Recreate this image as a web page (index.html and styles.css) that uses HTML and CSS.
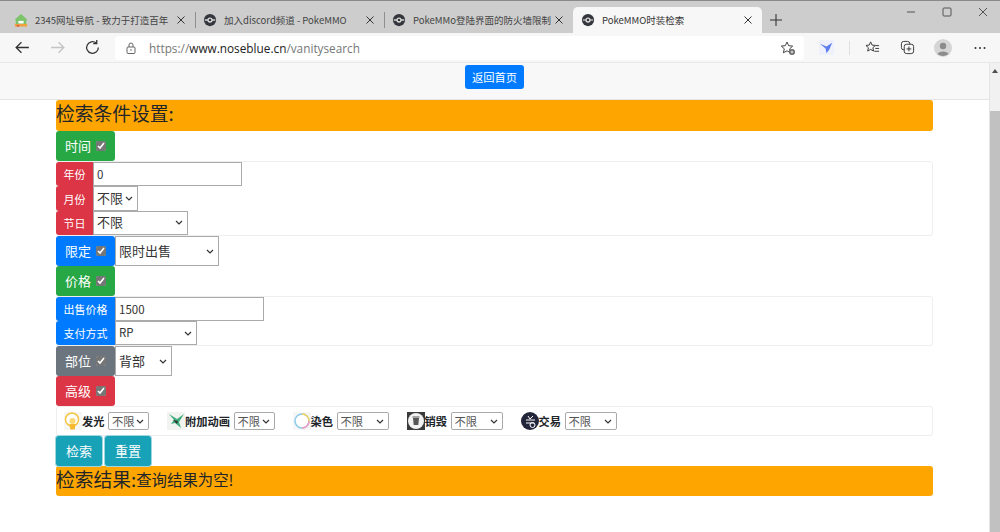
FILE: index.html
```html
<!DOCTYPE html>
<html lang="zh-CN">
<head>
    <meta charset="UTF-8">
    <title>PokeMMO时装检索</title>
    <link rel="stylesheet" href="styles.css">
</head>
<body>

<div class="tabbar">
    <div class="tab">
        <svg class="favicon" viewBox="0 0 16 16"><path d="M8 1 1 7.500l1 1V14h12V8.500l1-1z" fill="#7cc36a"/><path d="M5 9h6v3H5z" fill="#fff"/><path d="M1 12.500h14v3H1z" fill="#f0a33c"/><path d="M3 13.500h3v2H3z" fill="#e2574c"/></svg>
        <span class="tab-title">2345网址导航 - 致力于打造百年</span>
        <svg class="tab-close" viewBox="0 0 8 8"><path d="M.5.500l7 7M7.500.500l-7 7" stroke="#333" fill="none"/></svg>
    </div>
    <div class="tab tab-sep">
        <svg class="favicon" viewBox="0 0 16 16"><circle cx="8" cy="8" r="7" fill="#33363c"/><path d="M2 7.200h12v1.600H2z" fill="#ddd"/><circle cx="8" cy="8" r="3" fill="#ddd"/><circle cx="8" cy="8" r="1.500" fill="#33363c"/></svg>
        <span class="tab-title">加入discord频道 - PokeMMO</span>
        <svg class="tab-close" viewBox="0 0 8 8"><path d="M.5.500l7 7M7.500.500l-7 7" stroke="#333" fill="none"/></svg>
    </div>
    <div class="tab tab-sep">
        <svg class="favicon" viewBox="0 0 16 16"><circle cx="8" cy="8" r="7" fill="#33363c"/><path d="M2 7.200h12v1.600H2z" fill="#ddd"/><circle cx="8" cy="8" r="3" fill="#ddd"/><circle cx="8" cy="8" r="1.500" fill="#33363c"/></svg>
        <span class="tab-title">PokeMMo登陆界面的防火墙限制</span>
        <svg class="tab-close" viewBox="0 0 8 8"><path d="M.5.500l7 7M7.500.500l-7 7" stroke="#333" fill="none"/></svg>
    </div>
    <div class="tab tab-active">
        <svg class="favicon" viewBox="0 0 16 16"><circle cx="8" cy="8" r="7" fill="#33363c"/><path d="M2 7.200h12v1.600H2z" fill="#bbb"/><circle cx="8" cy="8" r="3" fill="#ddd"/><circle cx="8" cy="8" r="1.500" fill="#33363c"/></svg>
        <span class="tab-title">PokeMMO时装检索</span>
        <svg class="tab-close" viewBox="0 0 8 8"><path d="M.5.500l7 7M7.500.500l-7 7" stroke="#333" fill="none"/></svg>
    </div>
    <svg class="new-tab" viewBox="0 0 12 12"><path d="M6 0v12M0 6h12" stroke="#333" stroke-width="1.100" fill="none"/></svg>
    <div class="window-btns">
        <svg viewBox="0 0 10 10"><path d="M1 5h8" stroke="#555" fill="none"/></svg>
        <svg viewBox="0 0 10 10"><rect x="1" y="1" width="8" height="8" rx="1" stroke="#555" fill="none"/></svg>
        <svg viewBox="0 0 10 10"><path d="M1 1l8 8M9 1l-8 8" stroke="#555" fill="none"/></svg>
    </div>
</div>

<div class="toolbar">
    <svg class="tool-icon" viewBox="0 0 16 16"><path d="M14 8H2M7 3 2 8l5 5" stroke="#333" stroke-width="1.200" fill="none"/></svg>
    <svg class="tool-icon" viewBox="0 0 16 16"><path d="M2 8h12M9 3l5 5-5 5" stroke="#c4c4c4" stroke-width="1.200" fill="none"/></svg>
    <svg class="tool-icon" viewBox="0 0 16 16"><path d="M13.500 8A5.500 5.500 0 1 1 11.500 3.800M12 1v3.300H8.700" stroke="#333" stroke-width="1.200" fill="none"/></svg>
    <div class="addressbar">
        <svg class="lock" viewBox="0 0 12 12"><rect x="2" y="5" width="8" height="6.500" rx="1" stroke="#666" fill="none"/><path d="M4 5V3a2 2 0 0 1 4 0v2" stroke="#666" fill="none"/><circle cx="6" cy="8" r=".8" fill="#666"/></svg>
        <span class="url"><span class="url-dim">https://</span>www.noseblue.cn<span class="url-dim">/vanitysearch</span></span>
        <svg class="star" viewBox="0 0 16 16"><path d="M7 2l1.700 3.700 4 .4-3 2.700.9 4L7 10.800 3.400 12.800l.9-4-3-2.700 4-.4z" stroke="#444" fill="#fff"/><circle cx="12" cy="12" r="3" fill="#666"/><path d="M10.500 12h3M12 10.500v3" stroke="#fff" stroke-width=".8"/></svg>
    </div>
    <div class="ext-icons">
        <svg class="ext" viewBox="0 0 16 16"><rect width="16" height="16" fill="#eef0fb"/><path d="M1 4l7 3 6-4-3 7-3 4-1-5z" fill="#5c7cf0"/></svg>
        <span class="ext-sep"></span>
        <svg class="ext" viewBox="0 0 16 16"><path d="M6 2l1.500 3.400 3.500.4-2.600 2.400.7 3.600L6 10l-3.100 1.800.7-3.600L1 5.800l3.500-.4zM11 6h4M11 9h4M10 12h5" stroke="#333" fill="none"/></svg>
        <svg class="ext" viewBox="0 0 16 16"><rect x="1.500" y="1.500" width="9" height="9" rx="2.500" stroke="#333" fill="none"/><rect x="4.500" y="4.500" width="10" height="10" rx="2.500" stroke="#333" fill="#f7f7f7"/><path d="M9.500 7v5M7 9.500h5" stroke="#333"/></svg>
        <svg class="avatar" viewBox="0 0 18 18"><circle cx="9" cy="9" r="9" fill="#d5d5d5"/><circle cx="9" cy="7" r="3.200" fill="#8c8c8c"/><path d="M3.500 15c1-3.500 10-3.500 11 0a9 9 0 0 1-11 0z" fill="#8c8c8c"/></svg>
        <svg class="more" viewBox="0 0 12 4"><circle cx="1.500" cy="2" r="1" fill="#333"/><circle cx="6" cy="2" r="1" fill="#333"/><circle cx="10.500" cy="2" r="1" fill="#333"/></svg>
    </div>
</div>

<div class="viewport">
    <div class="page">
        <nav class="topnav">
            <a class="btn-home">返回首页</a>
        </nav>

        <main class="container">
            <h2 class="heading heading-top">检索条件设置:</h2>

            <div class="line"><label class="tag tag-green">时间 <input type="checkbox" checked></label></div>
            <div class="card card-date">
                <div class="group">
                    <span class="tag-sm tag-sm-year tag-red">年份</span>
                    <input class="field" type="text" value="0">
                </div>
                <div class="group">
                    <span class="tag-sm tag-sm-year tag-red">月份</span>
                    <select class="sel sel-month"><option>不限</option></select>
                </div>
                <div class="group">
                    <span class="tag-sm tag-sm-year tag-red">节日</span>
                    <select class="sel sel-festival"><option>不限</option></select>
                </div>
            </div>

            <div class="line">
                <label class="tag tag-blue">限定 <input type="checkbox" checked></label>
                <select class="sel sel-limit"><option>限时出售</option></select>
            </div>

            <div class="line"><label class="tag tag-green">价格 <input type="checkbox" checked></label></div>
            <div class="card">
                <div class="group">
                    <span class="tag-sm tag-blue">出售价格</span>
                    <input class="field" type="text" value="1500">
                </div>
                <div class="group">
                    <span class="tag-sm tag-blue">支付方式</span>
                    <select class="sel sel-pay"><option>RP</option></select>
                </div>
            </div>

            <div class="line">
                <label class="tag tag-gray">部位 <input type="checkbox" checked></label>
                <select class="sel sel-part"><option>背部</option></select>
            </div>

            <div class="line"><label class="tag tag-red">高级 <input type="checkbox" checked></label></div>
            <div class="card card-adv">
                <div class="adv">
                    <svg class="adv-icon" viewBox="0 0 18 18"><rect width="18" height="18" fill="#f6f6f6"/><circle cx="8" cy="7.500" r="6.500" fill="#fff" stroke="#f5c542" stroke-width="1.500"/><path d="M5.500 12h6l-.8 5.500H6.300z" fill="#f5b82e"/><circle cx="8.500" cy="9" r="3" fill="#fbd872"/></svg>
                    <b>发光</b>
                    <select class="sel-adv sel-adv-short"><option>不限</option></select>
                </div>
                <div class="adv">
                    <svg class="adv-icon" viewBox="0 0 18 18"><rect width="18" height="18" fill="#f1f3f1"/><path d="M2 2l8 5 7-5-5 8 2 6-6-5-4 1 3-4z" fill="#3fae7d"/><path d="M6 8l5 1-1 3z" fill="#333"/></svg>
                    <b>附加动画</b>
                    <select class="sel-adv sel-adv-short"><option>不限</option></select>
                </div>
                <div class="adv">
                    <svg class="adv-icon" viewBox="0 0 18 18"><rect width="18" height="18" fill="#f6f6f6"/><circle cx="9" cy="9" r="7" fill="#fff" stroke="#8ccbe8" stroke-width="1.500"/><path d="M9 2a7 7 0 0 1 7 7" stroke="#f3d35a" stroke-width="1.500" fill="none"/><path d="M16 9a7 7 0 0 1-7 7" stroke="#f29bbd" stroke-width="1.500" fill="none"/></svg>
                    <b>染色</b>
                    <select class="sel-adv sel-adv-long"><option>不限</option></select>
                </div>
                <div class="adv">
                    <svg class="adv-icon" viewBox="0 0 18 18"><rect width="18" height="18" fill="#3a3a3a"/><circle cx="9" cy="9" r="8" fill="#f2f2f2"/><path d="M6 6h6l-.7 7H6.700z" fill="#555"/><path d="M5.500 5h7" stroke="#555"/></svg>
                    <b>销毁</b>
                    <select class="sel-adv sel-adv-long"><option>不限</option></select>
                </div>
                <div class="adv">
                    <svg class="adv-icon" viewBox="0 0 18 18"><circle cx="9" cy="9" r="9" fill="#23253a"/><path d="M7 4l2 3 3-3M5 8h9M5 11h8" stroke="#fff" fill="none"/><circle cx="11.500" cy="13" r="2.500" stroke="#fff" fill="none"/></svg>
                    <b>交易</b>
                    <select class="sel-adv sel-adv-long"><option>不限</option></select>
                </div>
            </div>

            <div class="line actions">
                <a class="btn-info">检索</a>
                <a class="btn-info">重置</a>
            </div>

            <h2 class="heading">检索结果:<small>查询结果为空!</small></h2>
        </main>
    </div>

    <div class="scrollbar">
        <span class="scroll-arrow"></span>
        <span class="scroll-thumb"></span>
    </div>
</div>

</body>
</html>
```

FILE: styles.css
```css
* {
    box-sizing: border-box;
}

html, body {
    height: 100%;
}

body {
    margin: 0;
    overflow: hidden;
    display: flex;
    flex-direction: column;
    font-family: "Noto Sans CJK SC", "Noto Sans", sans-serif;
    color: #212529;
    background-color: #fff;
}

/* browser chrome */
.tabbar {
    height: 33px;
    flex: none;
    display: flex;
    align-items: flex-end;
    padding-left: 6px;
    background-color: #cdcdcd;
    border-top: 1px solid #8a8a8a;
}

.tab {
    width: 189px;
    height: 26px;
    display: flex;
    align-items: center;
    padding-left: 8px;
    font-size: 9.500px;
    color: #444;
    position: relative;
}

.tab-sep::before {
    content: "";
    position: absolute;
    left: 0;
    top: 5px;
    height: 16px;
    border-left: 1px solid #8f8f8f;
}

.tab-active {
    background-color: #f7f7f7;
    border-radius: 5px 5px 0 0;
    color: #333;
}

.favicon {
    width: 14px;
    height: 14px;
    flex: none;
}

.tab-title {
    width: 139px;
    margin-left: 7px;
    white-space: nowrap;
}

.tab-close {
    width: 8px;
    height: 8px;
    flex: none;
    margin-left: 3px;
}

.new-tab {
    width: 12px;
    height: 12px;
    margin: 0 0 7px 8px;
}

.window-btns {
    margin-left: auto;
    align-self: flex-start;
    display: flex;
    gap: 26px;
    margin-top: 6px;
    padding-right: 12px;
}

.window-btns svg {
    width: 10px;
    height: 10px;
}

.toolbar {
    height: 30px;
    flex: none;
    display: flex;
    align-items: center;
    padding: 0 0 0 14px;
    background-color: #f7f7f7;
    border-bottom: 1px solid #e8e8e8;
}

.tool-icon {
    width: 17px;
    height: 17px;
    margin-right: 18px;
}

.addressbar {
    width: 689px;
    height: 24px;
    margin-left: -4px;
    display: flex;
    align-items: center;
    padding: 0 8px 0 10px;
    background-color: #fff;
    border-radius: 4px;
}

.lock {
    width: 12px;
    height: 12px;
}

.url {
    margin-left: 12px;
    font-family: "Open Sans", sans-serif;
    font-size: 11.800px;
    color: #222;
}

.url-dim {
    color: #777;
}

.star {
    width: 16px;
    height: 16px;
    margin-left: auto;
}

.ext-icons {
    display: flex;
    align-items: center;
    margin-left: 15px;
}

.ext {
    width: 15px;
    height: 15px;
}

.ext-sep {
    height: 14px;
    margin: 0 15px 0 15px;
    border-left: 1px solid #e0e0e0;
}

.ext-icons .ext:nth-of-type(3) {
    margin-left: 20px;
}

.avatar {
    width: 18px;
    height: 18px;
    margin-left: 19px;
}

.more {
    width: 12px;
    height: 4px;
    margin-left: 22px;
}

/* the page itself */
.viewport {
    flex: 1;
    display: flex;
    min-height: 0;
}

.page {
    flex: 1;
    min-width: 0;
}

.topnav {
    height: 37px;
    display: flex;
    justify-content: center;
    padding-top: 2px;
    background-color: #f8f8f8;
    border-bottom: 1px solid #e4e4e4;
}

.btn-home {
    width: 59px;
    height: 24px;
    display: flex;
    align-items: center;
    justify-content: center;
    font-size: 11.300px;
    color: #fff;
    background-color: #007bff;
    border-radius: 3px;
}

.container {
    margin: 0 56px;
}

.heading {
    height: 30px;
    margin: 0;
    padding-bottom: 4px;
    font-size: 18.750px;
    font-weight: 400;
    line-height: 28px;
    background-color: orange;
    border-radius: 3px;
    display: flex;
    align-items: center;
}

.heading-top {
    height: 31px;
    padding-bottom: 5px;
}

.heading small {
    font-size: 15.400px;
}

.line {
    height: 30px;
    display: flex;
}

.tag {
    width: 59px;
    height: 30px;
    display: flex;
    align-items: center;
    justify-content: center;
    gap: 5px;
    padding-bottom: 2px;
    font-size: 13px;
    color: #fff;
    border-radius: 3px;
}

.tag input {
    width: 10px;
    height: 10px;
    margin: 2px 0 0;
    accent-color: #767676;
}

.tag-green {
    background-color: #28a745;
}

.tag-blue {
    background-color: #007bff;
}

.tag-gray {
    background-color: #6c757d;
}

.tag-red {
    background-color: #dc3545;
}

.card {
    border: 1px solid #eee;
    border-radius: 3px;
}

.group {
    height: 24px;
    display: flex;
    margin-left: -1px;
}

.card-date .group {
    height: 24.400px;
}

.tag-sm {
    width: 59px;
    display: flex;
    align-items: center;
    justify-content: center;
    font-size: 11px;
    color: #fff;
    border-radius: 3px 0 0 3px;
}

.tag-sm-year {
    width: 37px;
}

.field {
    width: 149px;
    height: 100%;
    padding: 0 3px;
    font-family: inherit;
    font-size: 11.500px;
    color: #333;
    background-color: #fff;
    border: 1px solid #aaa;
}

/* own chevron, the native arrow takes too much room */
.sel,
.sel-adv {
    appearance: none;
    padding: 0 0 0 3px;
    font-family: inherit;
    background-color: #fff;
    background-image: url("data:image/svg+xml,%3Csvg xmlns='http://www.w3.org/2000/svg' viewBox='0 0 8 5'%3E%3Cpath d='M1 1l3 3 3-3' stroke='%23333' stroke-width='1.200' fill='none'/%3E%3C/svg%3E");
    background-repeat: no-repeat;
    background-position: right 4px center;
    background-size: 8px 5px;
    border: 1px solid #aaa;
}

.sel {
    height: 100%;
    padding-bottom: 2px;
    font-size: 13px;
    color: #333;
}

.sel-month {
    width: 45px;
}

.sel-festival {
    width: 95px;
}

.sel-limit {
    width: 104px;
}

.sel-pay {
    width: 82px;
    font-size: 11.500px;
}

.sel-part {
    width: 57px;
}

.card-adv {
    height: 30px;
    display: flex;
    align-items: center;
    gap: 18px;
    padding-left: 7px;
}

.adv {
    display: flex;
    align-items: center;
    font-size: 11.250px;
}

.adv-icon {
    width: 18px;
    height: 18px;
}

.adv b {
    margin-right: 3.500px;
    white-space: nowrap;
}

.sel-adv {
    height: 18px;
    font-size: 11.250px;
    color: #555;
    border-radius: 2px;
}

.sel-adv-short {
    width: 41px;
}

.sel-adv-long {
    width: 52px;
}

.actions {
    gap: 3px;
}

.btn-info {
    width: 46px;
    height: 30px;
    display: flex;
    align-items: center;
    justify-content: center;
    padding-bottom: 2px;
    font-size: 13px;
    color: #fff;
    background-color: #17a2b8;
    border-radius: 3px;
    box-shadow: 0 0 0 1px #9fd6df;
}

.scrollbar {
    width: 11px;
    flex: none;
    display: flex;
    flex-direction: column;
    background-color: #f1f1f1;
    border-left: 1px solid #e4e4e4;
}

.scroll-arrow {
    width: 0;
    margin: 6px auto 0;
    border: 3px solid transparent;
    border-top: 0;
    border-bottom: 4px solid #505050;
}

.scroll-thumb {
    flex: 1;
    margin-top: 38px;
    background-color: #c1c1c1;
}
```
